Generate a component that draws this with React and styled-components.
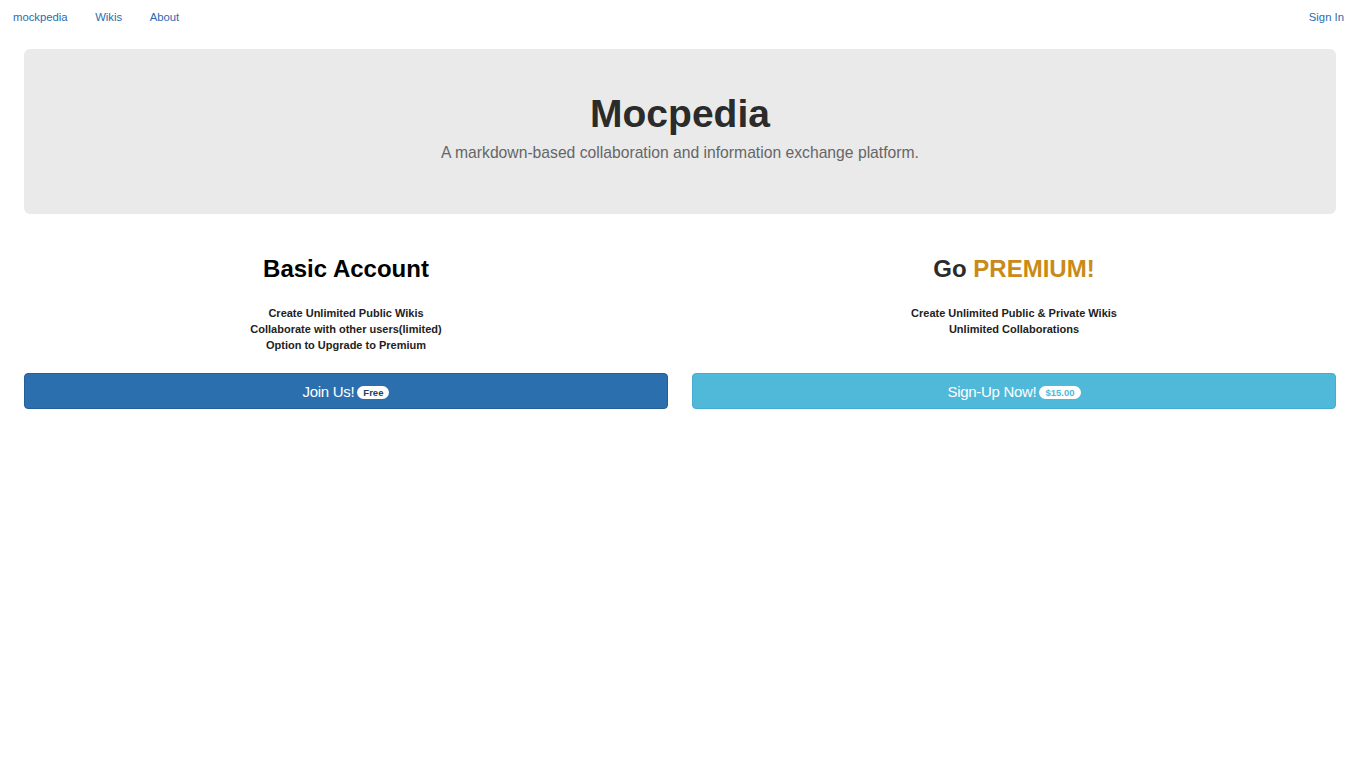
import React from 'react';
import styled, { createGlobalStyle } from 'styled-components';

const GlobalStyle = createGlobalStyle`
  * { box-sizing: border-box; }
  body {
    margin: 0;
    background: #ffffff;
    font-family: "Liberation Sans", Arial, sans-serif;
    color: #333333;
  }
`;

const App = () => {
  const plans = [
    {
      key: 'basic',
      title: <>Basic Account</>,
      features: ['Create Unlimited Public Wikis', 'Collaborate with other users(limited)', 'Option to Upgrade to Premium'],
      label: 'Join Us!',
      badge: 'Free',
      variant: 'primary',
    },
    {
      key: 'premium',
      title: (
        <>
          Go <Gold>PREMIUM!</Gold>
        </>
      ),
      features: ['Create Unlimited Public & Private Wikis', 'Unlimited Collaborations'],
      label: 'Sign-Up Now!',
      badge: '$15.00',
      variant: 'info',
    },
  ];

  return (
    <>
      <GlobalStyle />
      <Nav>
        <NavGroup>
          <NavLink href="#">mockpedia</NavLink>
          <NavLink href="#">Wikis</NavLink>
          <NavLink href="#">About</NavLink>
        </NavGroup>
        <NavLink href="#">Sign In</NavLink>
      </Nav>
      <Container>
        <Jumbotron>
          <Title>Mocpedia</Title>
          <Lead>A markdown-based collaboration and information exchange platform.</Lead>
        </Jumbotron>
        <Plans>
          {plans.map((plan) => (
            <Plan key={plan.key}>
              <PlanTitle $dark={plan.variant === 'primary'}>{plan.title}</PlanTitle>
              <Features>
                {plan.features.map((f) => (
                  <li key={f}>{f}</li>
                ))}
              </Features>
              <Button $variant={plan.variant}>
                {plan.label}
                <Badge $variant={plan.variant}>{plan.badge}</Badge>
              </Button>
            </Plan>
          ))}
        </Plans>
      </Container>
    </>
  );
};

const Nav = styled.nav`
  height: 33px;
  padding: 0 15px 0 13px;
  display: flex;
  align-items: center;
  justify-content: space-between;
`;

const NavGroup = styled.div`
  display: flex;
  gap: 27.5px;
`;

const NavLink = styled.a`
  font-size: 11.3px;
  color: #2a6cb0;
  text-decoration: none;
`;

const Container = styled.div`
  padding: 16px 23px 0 24px;
`;

const Jumbotron = styled.div`
  height: 165px;
  background: #eaeaea;
  border-radius: 6px;
  display: flex;
  flex-direction: column;
  align-items: center;
  padding-top: 40px;
`;

const Title = styled.h1`
  margin: 0;
  font-size: 39px;
  line-height: 50px;
  font-weight: 700;
  color: #2b2b2b;
`;

const Lead = styled.p`
  margin: 1px 0 0;
  font-size: 15.7px;
  line-height: 26px;
  color: #666666;
  font-weight: 300;
`;

const Plans = styled.div`
  display: grid;
  grid-template-columns: 1fr 1fr;
  gap: 24px;
  margin-top: 40px;
`;

const Plan = styled.div`
  display: flex;
  flex-direction: column;
  align-items: center;
`;

const PlanTitle = styled.h2`
  margin: 0;
  font-size: 24px;
  line-height: 30px;
  font-weight: 700;
  color: ${({ $dark }) => ($dark ? '#000000' : '#2b2b2b')};
`;

const Gold = styled.span`
  color: #c98a17;
`;

const Features = styled.ul`
  list-style: none;
  margin: 21px 0 0;
  padding: 0;
  height: 64px;
  text-align: center;
  font-size: 11px;
  line-height: 16px;
  font-weight: 700;
  color: #222222;
`;

const Button = styled.button`
  width: 100%;
  height: 36px;
  margin-top: 4px;
  border-radius: 4px;
  border: 1px solid ${({ $variant }) => ($variant === 'primary' ? '#245f97' : '#45add0')};
  background: ${({ $variant }) => ($variant === 'primary' ? '#2c6fae' : '#50b8d9')};
  color: #ffffff;
  font-family: "Liberation Sans", Arial, sans-serif;
  font-size: 15px;
  letter-spacing: -0.3px;
  display: flex;
  align-items: center;
  justify-content: center;
  gap: 3px;
  cursor: pointer;
`;

const Badge = styled.span`
  display: inline-block;
  background: #ffffff;
  color: ${({ $variant }) => ($variant === 'primary' ? '#23415f' : '#50b8d9')};
  font-size: 9.5px;
  font-weight: 700;
  letter-spacing: 0;
  line-height: 13px;
  padding: 0 6px;
  margin-top: 2px;
  border-radius: 7px;
`;

export default App;
